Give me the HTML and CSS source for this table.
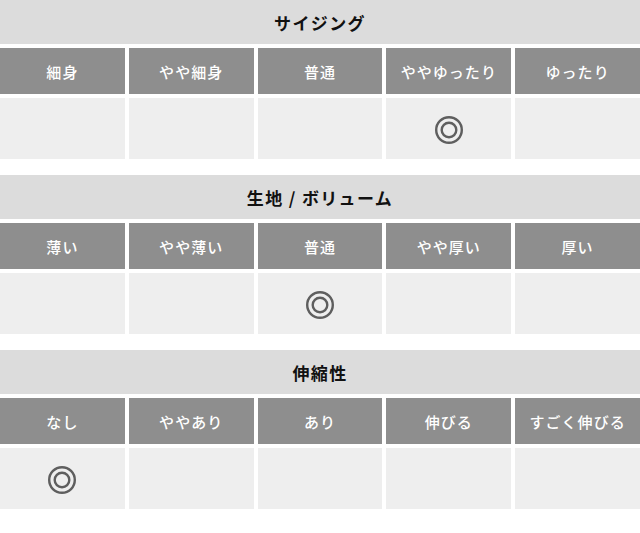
FILE: index.html
```html
<!DOCTYPE html>
<html lang="ja">
<head>
<meta charset="utf-8">
<title>サイズ感</title>
<link rel="stylesheet" href="styles.css">
</head>
<body>
<section class="spec">
  <h2 class="spec-title">サイジング</h2>
  <div class="spec-grid">
    <div class="spec-head">細身</div>
    <div class="spec-head">やや細身</div>
    <div class="spec-head">普通</div>
    <div class="spec-head">ややゆったり</div>
    <div class="spec-head">ゆったり</div>
    <div class="spec-cell"></div>
    <div class="spec-cell"></div>
    <div class="spec-cell"></div>
    <div class="spec-cell"><svg class="mark" viewBox="0 0 30 30" role="img" aria-label="◎"><title>◎</title><circle cx="15" cy="15" r="12.8"/><circle cx="15" cy="15" r="7.3"/></svg></div>
    <div class="spec-cell"></div>
  </div>
</section>
<section class="spec">
  <h2 class="spec-title">生地 / ボリューム</h2>
  <div class="spec-grid">
    <div class="spec-head">薄い</div>
    <div class="spec-head">やや薄い</div>
    <div class="spec-head">普通</div>
    <div class="spec-head">やや厚い</div>
    <div class="spec-head">厚い</div>
    <div class="spec-cell"></div>
    <div class="spec-cell"></div>
    <div class="spec-cell"><svg class="mark" viewBox="0 0 30 30" role="img" aria-label="◎"><title>◎</title><circle cx="15" cy="15" r="12.8"/><circle cx="15" cy="15" r="7.3"/></svg></div>
    <div class="spec-cell"></div>
    <div class="spec-cell"></div>
  </div>
</section>
<section class="spec">
  <h2 class="spec-title">伸縮性</h2>
  <div class="spec-grid">
    <div class="spec-head">なし</div>
    <div class="spec-head">ややあり</div>
    <div class="spec-head">あり</div>
    <div class="spec-head">伸びる</div>
    <div class="spec-head">すごく伸びる</div>
    <div class="spec-cell"><svg class="mark" viewBox="0 0 30 30" role="img" aria-label="◎"><title>◎</title><circle cx="15" cy="15" r="12.8"/><circle cx="15" cy="15" r="7.3"/></svg></div>
    <div class="spec-cell"></div>
    <div class="spec-cell"></div>
    <div class="spec-cell"></div>
    <div class="spec-cell"></div>
  </div>
</section>
</body>
</html>
```
FILE: styles.css
```css
html, body {
  margin: 0;
  padding: 0;
  background: #ffffff;
}
body {
  font-family: "Noto Sans CJK JP", "Noto Sans", sans-serif;
  width: 640px;
}
.spec {
  display: flex;
  flex-direction: column;
  gap: 4px;
  margin-bottom: 16px;
}
.spec-title {
  margin: 0;
  height: 44px;
  background: #dcdcdc;
  color: #111111;
  font-size: 17px;
  font-weight: 700;
  letter-spacing: 0.08em;
  display: flex;
  align-items: center;
  justify-content: center;
}
.spec-grid {
  display: grid;
  grid-template-columns: repeat(5, 1fr);
  grid-template-rows: 46px 61px;
  gap: 4px;
}
.spec-head {
  background: #8e8e8e;
  color: #ffffff;
  font-size: 15px;
  font-weight: 500;
  letter-spacing: 0.07em;
  display: flex;
  align-items: center;
  justify-content: center;
}
.spec-cell {
  background: #eeeeee;
  display: flex;
  align-items: center;
  justify-content: center;
}
.mark {
  width: 30px;
  height: 30px;
  margin-top: 3px;
  fill: none;
  stroke: #5e5e5e;
  stroke-width: 2.4;
}
```
